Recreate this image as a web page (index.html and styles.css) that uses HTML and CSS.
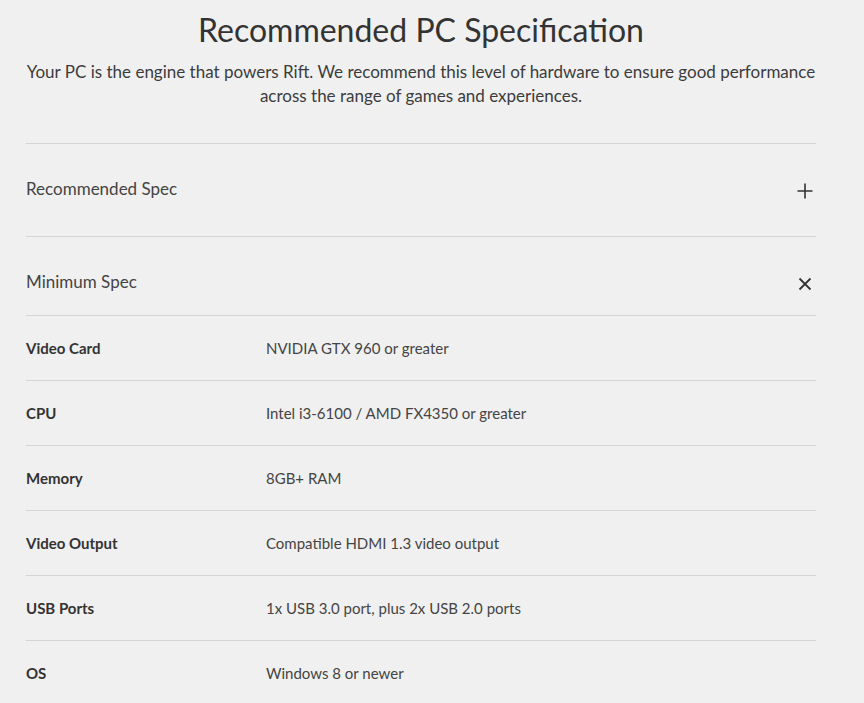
FILE: index.html
```html
<!DOCTYPE html>
<html lang="en">
<head>
<meta charset="utf-8">
<title>Recommended PC Specification</title>
<link rel="stylesheet" href="styles.css">
</head>
<body>
<main class="page">
  <h1 class="title">Recommended PC Specification</h1>
  <p class="intro">Your PC is the engine that powers Rift. We recommend this level of hardware to ensure good performance across the range of games and experiences.</p>

  <section class="accordion">
    <div class="acc-item">
      <div class="acc-head acc-closed">
        <span class="acc-title">Recommended Spec</span>
        <svg class="acc-icon" width="18" height="18" viewBox="0 0 18 18"><path d="M9 1.5V16.5M1.5 9H16.5" stroke="#333" stroke-width="1.6" fill="none"/></svg>
      </div>
    </div>
    <div class="acc-item">
      <div class="acc-head acc-open">
        <span class="acc-title">Minimum Spec</span>
        <svg class="acc-icon" width="18" height="18" viewBox="0 0 18 18"><path d="M3.5 3.5L14.5 14.5M14.5 3.5L3.5 14.5" stroke="#333" stroke-width="1.8" fill="none"/></svg>
      </div>
      <div class="spec-table">
        <div class="spec-row"><span class="spec-label">Video Card</span><span class="spec-value">NVIDIA GTX 960 or greater</span></div>
        <div class="spec-row"><span class="spec-label">CPU</span><span class="spec-value">Intel i3-6100 / AMD FX4350 or greater</span></div>
        <div class="spec-row"><span class="spec-label">Memory</span><span class="spec-value">8GB+ RAM</span></div>
        <div class="spec-row"><span class="spec-label">Video Output</span><span class="spec-value">Compatible HDMI 1.3 video output</span></div>
        <div class="spec-row"><span class="spec-label">USB Ports</span><span class="spec-value">1x USB 3.0 port, plus 2x USB 2.0 ports</span></div>
        <div class="spec-row"><span class="spec-label">OS</span><span class="spec-value">Windows 8 or newer</span></div>
      </div>
    </div>
  </section>
</main>
</body>
</html>
```

FILE: styles.css
```css
* { box-sizing: border-box; }
html, body {
  margin: 0;
  padding: 0;
  background: #f0f0f0;
  color: #3a3a3a;
  font-family: "Lato", "Open Sans", sans-serif;
}
.page {
  margin: 0 48px 0 26px;
  padding-top: 10px;
}
.title {
  margin: 0;
  font-size: 32px;
  line-height: 40px;
  font-weight: 400;
  text-align: center;
  color: #333;
}
.intro {
  margin: 10px 0 35px;
  font-size: 17px;
  line-height: 24px;
  text-align: center;
  color: #3c3c3c;
}
.accordion {
  border-top: 1px solid #d5d5d5;
}
.acc-item {
  border-bottom: 1px solid #d5d5d5;
}
.acc-item:last-child { border-bottom: none; }
.acc-head {
  display: flex;
  justify-content: space-between;
  align-items: flex-start;
  padding-top: 33px;
}
.acc-closed { height: 92px; }
.acc-open { height: 79px; border-bottom: 1px solid #d5d5d5; }
.acc-title {
  font-size: 17px;
  line-height: 24px;
  color: #444;
}
.acc-icon { margin-top: 5px; margin-right: 2px; }
.spec-row {
  display: flex;
  align-items: center;
  height: 65px;
  border-bottom: 1px solid #d5d5d5;
  font-size: 15px;
  line-height: 20px;
}
.spec-label {
  flex: 0 0 240px;
  font-weight: 700;
  color: #333;
}
.spec-value {
  flex: 1 1 auto;
  color: #444;
}
```
